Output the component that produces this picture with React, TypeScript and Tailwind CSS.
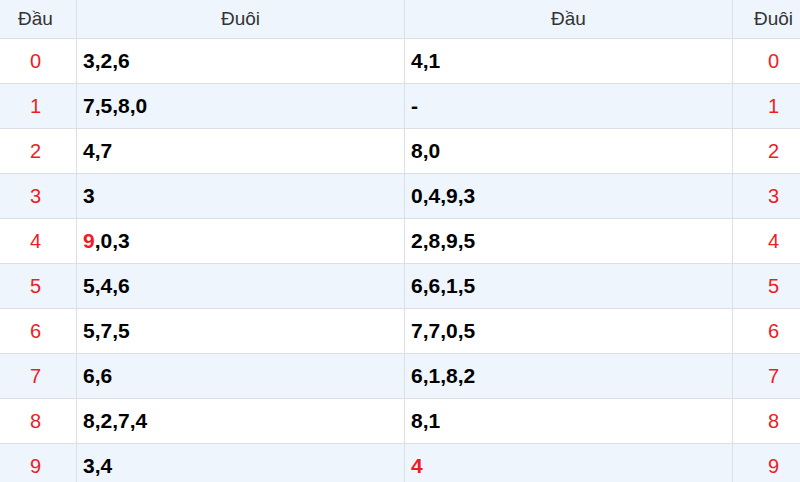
import React from "react";

type Row = { dau: string; duoi: React.ReactNode; dau2: React.ReactNode };

const Red = ({ children }: { children: React.ReactNode }) => (
  <span className="text-[#ee1c25]">{children}</span>
);

const rows: Row[] = [
  { dau: "0", duoi: "3,2,6", dau2: "4,1" },
  { dau: "1", duoi: "7,5,8,0", dau2: "-" },
  { dau: "2", duoi: "4,7", dau2: "8,0" },
  { dau: "3", duoi: "3", dau2: "0,4,9,3" },
  { dau: "4", duoi: <><Red>9</Red>,0,3</>, dau2: "2,8,9,5" },
  { dau: "5", duoi: "5,4,6", dau2: "6,6,1,5" },
  { dau: "6", duoi: "5,7,5", dau2: "7,7,0,5" },
  { dau: "7", duoi: "6,6", dau2: "6,1,8,2" },
  { dau: "8", duoi: "8,2,7,4", dau2: "8,1" },
  { dau: "9", duoi: "3,4", dau2: <Red>4</Red> },
];

export default function App() {
  return (
    <div className="w-[800px] h-[482px] overflow-hidden bg-white font-['Liberation_Sans',Arial,sans-serif]">
      {/* table is wider than the viewport: outer columns are cut at both edges */}
      <table className="w-[820px] ml-[-6px] border-collapse table-fixed">
        <colgroup>
          <col className="w-[82px]" />
          <col className="w-[328px]" />
          <col className="w-[328px]" />
          <col className="w-[82px]" />
        </colgroup>
        <thead>
          <tr className="h-[38px] bg-[#eef5fd] text-[19px] text-[#333]">
            <th className="border border-t-0 border-[#dcdfe3] font-normal text-center">Đầu</th>
            <th className="border border-t-0 border-[#dcdfe3] font-normal text-center">Đuôi</th>
            <th className="border border-t-0 border-[#dcdfe3] font-normal text-center">Đầu</th>
            <th className="border border-t-0 border-[#dcdfe3] font-normal text-center">Đuôi</th>
          </tr>
        </thead>
        <tbody>
          {rows.map((r, i) => (
            <tr key={r.dau} className={`h-[45px] ${i % 2 === 1 ? "bg-[#eef5fd]" : "bg-white"}`}>
              <td className="border border-[#dcdfe3] text-center text-[20px] text-[#ee1c25]">{r.dau}</td>
              <td className="border border-[#dcdfe3] pl-[6px] text-[21px] font-bold text-black">{r.duoi}</td>
              <td className="border border-[#dcdfe3] pl-[6px] text-[21px] font-bold text-black">{r.dau2}</td>
              <td className="border border-[#dcdfe3] text-center text-[20px] text-[#ee1c25]">{r.dau}</td>
            </tr>
          ))}
        </tbody>
      </table>
    </div>
  );
}
